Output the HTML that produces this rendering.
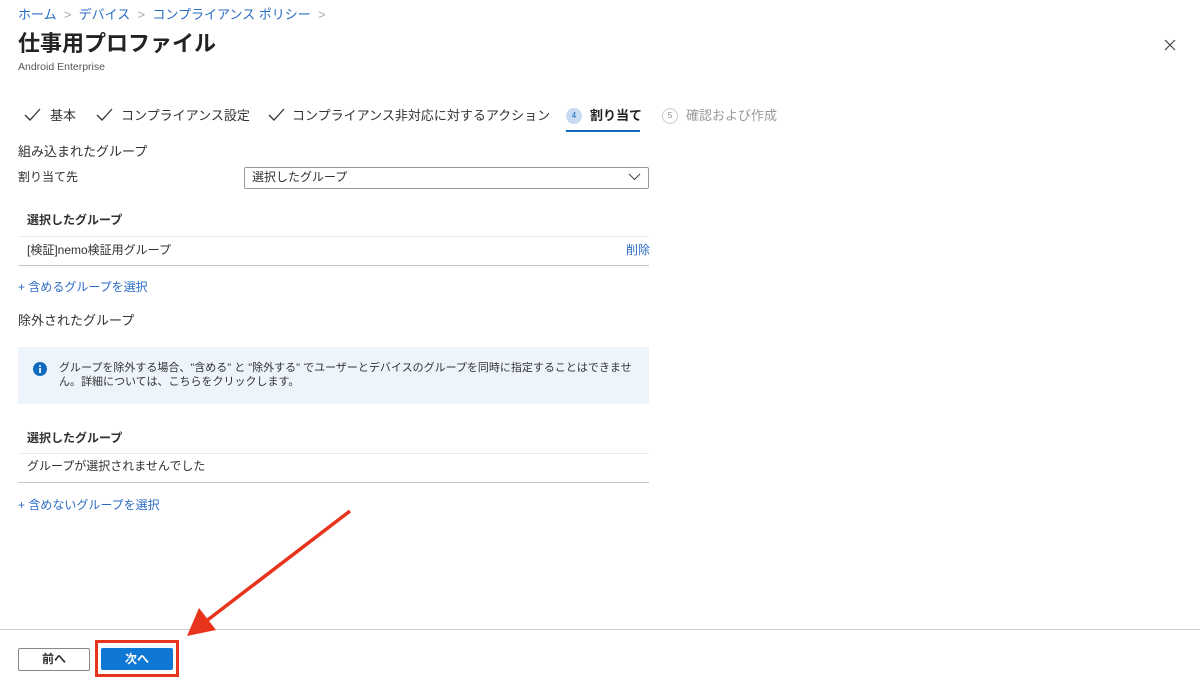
<!DOCTYPE html>
<html><head><meta charset="utf-8"><style>
body{margin:0;width:1200px;height:688px;background:#fff;font-family:"Liberation Sans","Noto Sans CJK JP",sans-serif;color:#323130;position:relative;overflow:hidden}
.a{position:absolute;white-space:nowrap;line-height:1}
.line{position:absolute;height:1px;background:#e1dfdd}
.ck{position:absolute;top:108px}
</style></head><body>
<div class="a" style="left:18px;top:8px;font-size:13px;color:#2b6cc4">ホーム <span style="color:#aaa">&nbsp;&gt;&nbsp;</span> デバイス <span style="color:#aaa">&nbsp;&gt;&nbsp;</span> コンプライアンス ポリシー <span style="color:#aaa">&nbsp;&gt;</span></div>
<div class="a" style="left:18px;top:33px;font-size:22px;font-weight:bold;color:#222">仕事用プロファイル</div>
<div class="a" style="left:18px;top:62px;font-size:10.5px;color:#555">Android Enterprise</div>
<svg class="a" style="left:1164px;top:39px" width="12" height="12"><path d="M1 1L11 11M11 1L1 11" stroke="#444" stroke-width="1.2"/></svg>

<svg class="ck" style="left:24px" width="17" height="14"><path d="M1 7L6 12L16 1" stroke="#333" stroke-width="1.3" fill="none"/></svg>
<div class="a" style="left:50px;top:109px;font-size:13px;color:#333">基本</div>
<svg class="ck" style="left:96px" width="17" height="14"><path d="M1 7L6 12L16 1" stroke="#333" stroke-width="1.3" fill="none"/></svg>
<div class="a" style="left:121px;top:109px;font-size:13px;color:#333">コンプライアンス設定</div>
<svg class="ck" style="left:268px" width="17" height="14"><path d="M1 7L6 12L16 1" stroke="#333" stroke-width="1.3" fill="none"/></svg>
<div class="a" style="left:292px;top:109px;font-size:13px;color:#333">コンプライアンス非対応に対するアクション</div>
<div class="a" style="left:566px;top:108px;width:16px;height:16px;border-radius:50%;background:#c7dcf3;font-size:8px;text-align:center;line-height:16px;color:#0f6cbd">4</div>
<div class="a" style="left:590px;top:109px;font-size:13px;font-weight:bold;color:#222">割り当て</div>
<div style="position:absolute;left:566px;top:130px;width:74px;height:2px;background:#0f6cbd"></div>
<div class="a" style="left:662px;top:108px;width:14px;height:14px;border-radius:50%;border:1px solid #ccc;font-size:8px;text-align:center;line-height:14px;color:#888">5</div>
<div class="a" style="left:686px;top:109px;font-size:13px;color:#999">確認および作成</div>

<div class="a" style="left:18px;top:145px;font-size:13px">組み込まれたグループ</div>
<div class="a" style="left:18px;top:171px;font-size:12px">割り当て先</div>
<div style="position:absolute;left:244px;top:167px;width:403px;height:20px;border:1px solid #999;border-radius:2px"></div>
<div class="a" style="left:252px;top:171px;font-size:12px">選択したグループ</div>
<svg class="a" style="left:628px;top:173px" width="13" height="8"><path d="M1 1L6.5 6.5L12 1" stroke="#444" fill="none"/></svg>

<div class="a" style="left:27px;top:214px;font-size:12px;font-weight:bold">選択したグループ</div>
<div class="line" style="left:18px;top:236px;width:631px;background:#edebe9"></div>
<div class="a" style="left:27px;top:244px;font-size:12px">[検証]nemo検証用グループ</div>
<div class="a" style="left:626px;top:244px;font-size:12px;color:#2b6cc4">削除</div>
<div class="line" style="left:18px;top:265px;width:631px;background:#c8c6c4"></div>
<div class="a" style="left:18px;top:281px;font-size:12px;color:#2b6cc4">+ 含めるグループを選択</div>

<div class="a" style="left:18px;top:314px;font-size:13px">除外されたグループ</div>
<div style="position:absolute;left:18px;top:347px;width:631px;height:57px;background:#eef4fc"></div>
<svg class="a" style="left:33px;top:362px" width="14" height="14"><circle cx="7" cy="7" r="7" fill="#0f6cbd"/><rect x="6.2" y="6" width="1.7" height="5" fill="#fff"/><circle cx="7" cy="4" r="1" fill="#fff"/></svg>
<div class="a" style="left:59px;top:363px;font-size:11px;color:#333">グループを除外する場合、"含める" と "除外する" でユーザーとデバイスのグループを同時に指定することはできませ</div>
<div class="a" style="left:59px;top:377px;font-size:11px;color:#333">ん。詳細については、こちらをクリックします。</div>

<div class="a" style="left:27px;top:432px;font-size:12px;font-weight:bold">選択したグループ</div>
<div class="line" style="left:18px;top:453px;width:631px;background:#edebe9"></div>
<div class="a" style="left:27px;top:460px;font-size:12px">グループが選択されませんでした</div>
<div class="line" style="left:18px;top:482px;width:631px;background:#c8c6c4"></div>
<div class="a" style="left:18px;top:499px;font-size:12px;color:#2b6cc4">+ 含めないグループを選択</div>

<div class="line" style="left:0;top:629px;width:1200px;background:#d0d0d0"></div>
<div style="position:absolute;left:18px;top:648px;width:70px;height:21px;border:1px solid #8a8886;border-radius:2px;font-size:12px;text-align:center;line-height:21px;font-weight:bold">前へ</div>
<div style="position:absolute;left:95px;top:640px;width:78px;height:31px;border:3px solid #e8341c"></div>
<div style="position:absolute;left:101px;top:648px;width:72px;height:22px;background:#0f78d4;border-radius:2px;color:#fff;font-size:12px;font-weight:bold;text-align:center;line-height:22px">次へ</div>
<svg style="position:absolute;left:0;top:0" width="1200" height="688"><line x1="350" y1="511" x2="205" y2="622" stroke="#e8341c" stroke-width="3.5"/><path d="M187 636L199 608L216 630Z" fill="#e8341c"/></svg>
</body></html>
